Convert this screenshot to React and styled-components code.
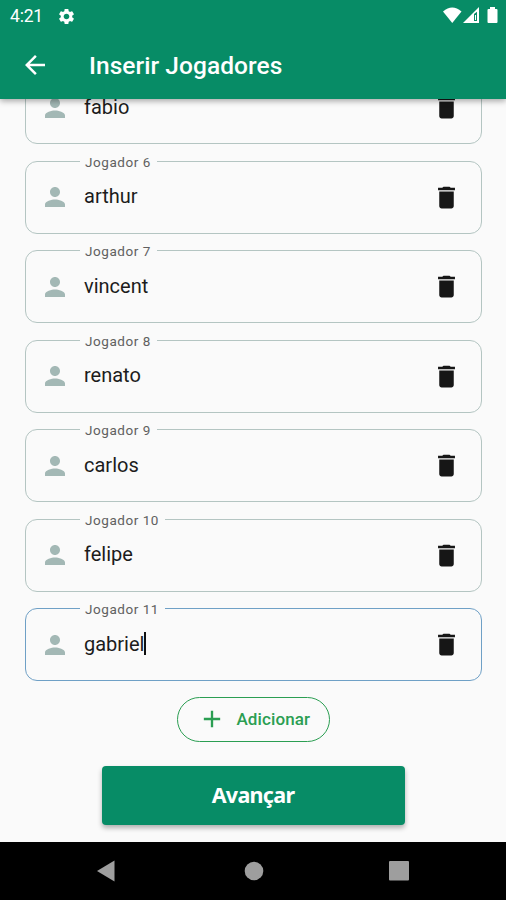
import React from "react"
import styled, { createGlobalStyle } from "styled-components"
import { MdAdd, MdArrowBack, MdDelete, MdPerson, MdSettings } from "react-icons/md"

const Colors = {
    green: "#078c66",
    green_lt: "#2b9e52",
    page: "#fafafa",
    border: "#b4c5c2",
    focus: "#6fa0c6",
    person: "#a3b8b5",
    ink: "#1c1c1c",
}

const GlobalStyle = createGlobalStyle`
    * {
        box-sizing: border-box;
    }
    body {
        margin: 0;
        font-family: Roboto, sans-serif;
        background-color: ${Colors.page};
    }
    button {
        margin: 0;
        padding: 0;
        border: none;
        background: none;
        color: inherit;
        font-family: inherit;
    }
    svg {
        display: block;
    }
`

const Screen = styled.div`
    display: flex;
    flex-direction: column;
    width: 506px;
    height: 900px;
    overflow: hidden;
    background-color: ${Colors.page};
`

const Header = styled.header`
    position: relative;
    z-index: 1;
    flex: none;
    height: 99px;
    color: white;
    background-color: ${Colors.green};
    box-shadow: 0 2px 6px rgba(0,0,0,0.35);
`

const StatusBar = styled.div`
    display: flex;
    align-items: center;
    height: 32px;
    padding: 0 8px 0 10px;
`

const Clock = styled.span`
    width: 47px;
    font-size: 17.5px;
    letter-spacing: -0.2px;
`

const StatusIcons = styled.div`
    display: flex;
    align-items: center;
    margin-left: auto;
`

const AppBar = styled.div`
    display: flex;
    align-items: center;
    height: 67px;
    padding-bottom: 1px;
    padding-left: 20px;
`

const Title = styled.h1`
    margin: 0 0 0 39px;
    font-size: 24.5px;
    font-weight: 500;
    letter-spacing: 0.05px;
    white-space: nowrap;
`

const Content = styled.main`
    display: flex;
    flex: 1;
    flex-direction: column;
    align-items: center;
    justify-content: flex-end;
    min-height: 0;
    padding-bottom: 17px;
    overflow: hidden;
`

const Players = styled.ul`
    display: flex;
    flex: none;
    flex-direction: column;
    gap: 16.5px;
    width: 457px;
    margin: 0 0 16px 1px;
    padding: 0;
    list-style: none;
`

const Player = styled.li`
    position: relative;
    display: flex;
    align-items: center;
    height: 73px;
    padding: 0 20px 0 14px;
    border: 1.5px solid ${props => (props.$focused ? Colors.focus : Colors.border)};
    border-radius: 12px;
    color: ${Colors.person};
`

const Label = styled.span`
    position: absolute;
    top: -8px;
    left: 54px;
    padding: 0 6px 0 5px;
    color: #606060;
    background-color: ${Colors.page};
    font-size: 13.5px;
    line-height: 16px;
    letter-spacing: 0.55px;
    white-space: nowrap;
`

const Name = styled.span`
    display: flex;
    align-items: center;
    flex: 1;
    margin: -2px 0 0 14px;
    color: ${Colors.ink};
    font-size: 20px;
    line-height: 24px;
`

const Caret = styled.span`
    width: 2px;
    height: 23px;
    background-color: #111;
`

const Remove = styled.button`
    color: #161616;
`

const AddButton = styled.button`
    display: flex;
    flex: none;
    align-items: center;
    gap: 11px;
    width: 153px;
    height: 45px;
    margin-bottom: 24px;
    padding: 0 0 1px 20px;
    border: 1px solid ${Colors.green_lt};
    border-radius: 23px;
    color: ${Colors.green_lt};
    font-size: 17px;
    font-weight: 500;
    letter-spacing: 0.1px;
`

const NextButton = styled.button`
    flex: none;
    width: 303px;
    height: 59px;
    margin-left: 1px;
    padding: 0 1px 2px 0;
    border-radius: 4px;
    color: white;
    background-color: ${Colors.green};
    font-family: "Noto Sans", sans-serif;
    font-size: 21.5px;
    font-weight: 700;
    letter-spacing: -0.7px;
    box-shadow: 0 3px 5px rgba(0,0,0,0.3);
`

const NavBar = styled.nav`
    display: grid;
    flex: none;
    grid-template-columns: 148px 145px 20px;
    align-items: center;
    height: 58px;
    padding-left: 96px;
    background-color: black;
`

// the first row is scrolled under the header, so it carries no label
const players = [
    { id: 5, name: "fabio" },
    { id: 6, label: "Jogador 6", name: "arthur" },
    { id: 7, label: "Jogador 7", name: "vincent" },
    { id: 8, label: "Jogador 8", name: "renato" },
    { id: 9, label: "Jogador 9", name: "carlos" },
    { id: 10, label: "Jogador 10", name: "felipe" },
    { id: 11, label: "Jogador 11", name: "gabriel", focused: true },
]

const Signals = () => (
    <StatusIcons>
        <svg width="55" height="18" viewBox="0 0 55 18" fill="white">
            <path d="M0 4.500Q9.250-3.500 18.500 4.500L9.250 16Z" />
            <path fillRule="evenodd" d="M20 16L36 0V16ZM31 7V14H34V4.800Z" />
            <path d="M32 8H33V13H32Z" />
            <path d="M45.500 2H47V0H52V2H53.500Q54.500 2 54.500 3V15Q54.500 16 53.500 16H45.500Q44.500 16 44.500 15V3Q44.500 2 45.500 2Z" />
        </svg>
    </StatusIcons>
)

const App = () => (
    <Screen>
        <GlobalStyle />
        <Header>
            <StatusBar>
                <Clock>4:21</Clock>
                <MdSettings size={19} />
                <Signals />
            </StatusBar>
            <AppBar>
                <button aria-label="Voltar"><MdArrowBack size={30} /></button>
                <Title>Inserir Jogadores</Title>
            </AppBar>
        </Header>
        <Content>
            <Players>
                {players.map(({ id, label, name, focused }) => (
                    <Player key={id} $focused={focused}>
                        {label && <Label>{label}</Label>}
                        <MdPerson size={30} />
                        <Name>{name}{focused && <Caret />}</Name>
                        <Remove aria-label="Remover"><MdDelete size={29} /></Remove>
                    </Player>
                ))}
            </Players>
            <AddButton><MdAdd size={28} />Adicionar</AddButton>
            <NextButton>Avançar</NextButton>
        </Content>
        <NavBar>
            <svg width="19" height="22" viewBox="0 0 19 22" fill="#9e9e9e">
                <path d="M1 11L18.500 0.500V21.500Z" />
            </svg>
            <svg width="20" height="20" viewBox="0 0 20 20" fill="#9e9e9e">
                <circle cx="10" cy="10" r="9.300" />
            </svg>
            <svg width="20" height="20" viewBox="0 0 20 20" fill="#9e9e9e">
                <rect width="20" height="19.500" rx="1" />
            </svg>
        </NavBar>
    </Screen>
)

export default App
